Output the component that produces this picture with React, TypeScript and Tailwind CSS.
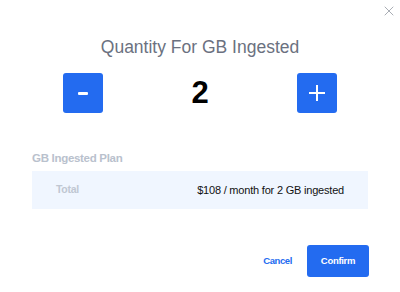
import { X } from "lucide-react";

export default function App() {
  return (
    <div className="relative h-[292px] w-[400px] overflow-hidden bg-white font-['Liberation_Sans',Arial,sans-serif]">
      <button
        type="button"
        className="absolute right-[3px] top-[3px] flex h-[16px] w-[16px] items-center justify-center text-[#a3a7ae]"
      >
        <X size={16} strokeWidth={1.4} />
      </button>

      <div className="flex flex-col pt-[36px]">
        <h1 className="text-center text-[17.5px] leading-[22px] text-[#6b7180]">
          Quantity For GB Ingested
        </h1>

        <div className="mt-[15px] flex items-center justify-between px-[63px]">
          <button
            type="button"
            className="flex h-[40px] w-[40px] items-center justify-center rounded-[3px] bg-[#236bf0]"
          >
            <span className="block h-[3px] w-[10px] rounded-[1px] bg-white" />
          </button>
          <span className="text-[31px] font-bold leading-[40px] text-black">2</span>
          <button
            type="button"
            className="relative flex h-[40px] w-[40px] items-center justify-center rounded-[3px] bg-[#236bf0]"
          >
            <span className="absolute h-[2px] w-[16px] bg-white" />
            <span className="absolute h-[16px] w-[2px] bg-white" />
          </button>
        </div>

        <div className="mx-[32px] mt-[37px]">
          <p className="text-[11.5px] font-bold leading-[16px] tracking-[-0.3px] text-[#b9c1cd]">
            GB Ingested Plan
          </p>
          <div className="mt-[5px] flex h-[38px] items-center justify-between bg-[#f0f6ff] pl-[24px] pr-[24px]">
            <span className="text-[10.5px] font-bold tracking-[-0.3px] text-[#c0c7d2]">Total</span>
            <span className="text-[11px] tracking-[-0.2px] text-[#111]">
              $108 / month for 2 GB ingested
            </span>
          </div>
        </div>

        <div className="mr-[31px] mt-[36px] flex items-center justify-end gap-[15px]">
          <button type="button" className="text-[9.5px] font-bold tracking-[-0.4px] text-[#236bf0]">
            Cancel
          </button>
          <button
            type="button"
            className="h-[32px] w-[62px] rounded-[3px] bg-[#236bf0] text-[9.5px] font-bold tracking-[-0.3px] text-white"
          >
            Confirm
          </button>
        </div>
      </div>
    </div>
  );
}
